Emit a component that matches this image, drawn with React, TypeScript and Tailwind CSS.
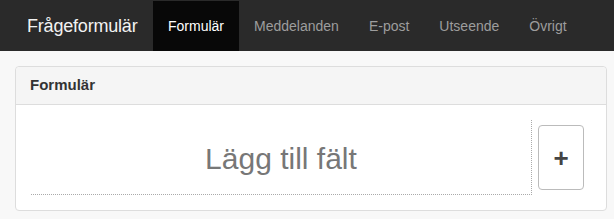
import React from 'react';

const links = ['Formulär', 'Meddelanden', 'E-post', 'Utseende', 'Övrigt'];

export default function App() {
  return (
    <div className="min-h-[219px] bg-[#f8f8f8] font-['Liberation_Sans',Arial,sans-serif]">
      {/* Navbar */}
      <nav className="flex h-[51px] items-stretch bg-[#2a2a2a] pl-[27px] pt-[1px]">
        <div className="flex w-[126px] items-center whitespace-nowrap text-[18px] tracking-[-0.2px] text-[#f2f2f2]">
          Frågeformulär
        </div>
        <ul className="flex items-stretch">
          {links.map((l, i) => (
            <li
              key={l}
              className={`flex items-center px-[15px] text-[14px] ${
                i === 0 ? 'bg-[#080808] text-white' : 'text-[#9d9d9d]'
              }`}
            >
              {l}
            </li>
          ))}
        </ul>
      </nav>

      {/* Panel */}
      <div className="ml-[15px] mt-[15px] w-[592px] rounded-[4px] border border-[#dddddd] bg-white">
        <div className="flex h-[38px] items-center rounded-t-[4px] border-b border-[#dddddd] bg-[#f5f5f5] px-[14px] text-[15px] font-bold text-[#333]">
          Formulär
        </div>
        <div className="flex items-start px-[15px] pb-[15px] pt-[15px]">
          <div className="flex h-[75px] w-[501px] items-center justify-center border-b border-r border-dotted border-[#aaa] pt-[2px] text-[30px] text-[#777]">
            Lägg till fält
          </div>
          <button className="ml-[6px] mt-[5px] flex h-[65px] w-[46px] items-center justify-center rounded-[4px] border border-[#bbb] bg-white text-[26px] font-bold leading-none text-[#444]">
            +
          </button>
        </div>
      </div>
    </div>
  );
}
